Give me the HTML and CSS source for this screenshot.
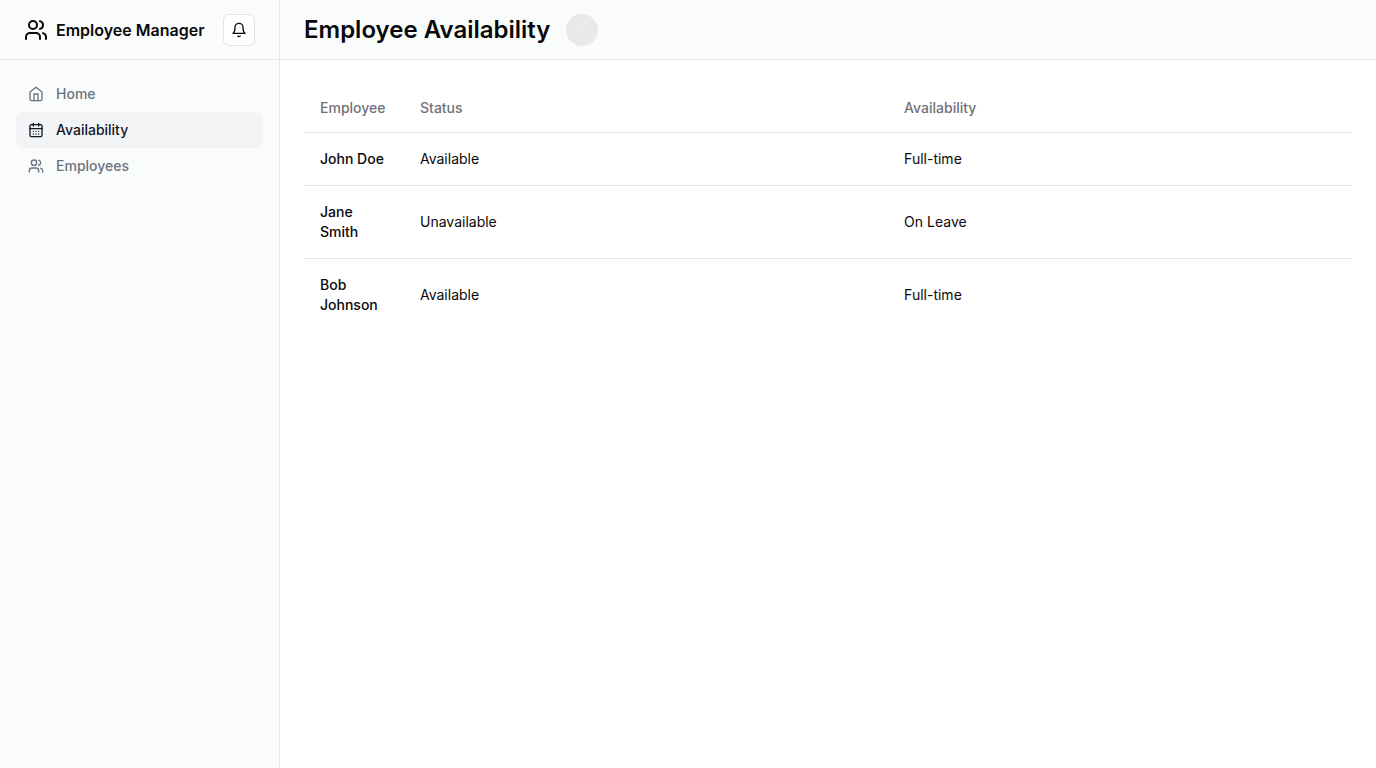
FILE: index.html
```html
<!DOCTYPE html>
<html lang="en">
<head>
<meta charset="utf-8">
<meta name="viewport" content="width=device-width, initial-scale=1">
<title>Employee Availability</title>
<link rel="stylesheet" href="styles.css">
</head>
<body>
<div class="app">
  <aside class="sidebar">
    <div class="sidebar-head">
      <a class="brand" href="#">
        <svg class="icon icon-lg" viewBox="0 0 24 24" aria-hidden="true"><path d="M16 21v-2a4 4 0 0 0-4-4H6a4 4 0 0 0-4 4v2"/><circle cx="9" cy="7" r="4"/><path d="M22 21v-2a4 4 0 0 0-3-3.87"/><path d="M16 3.13a4 4 0 0 1 0 7.75"/></svg>
        <span>Employee Manager</span>
      </a>
      <button class="bell" type="button" aria-label="Toggle notifications">
        <svg class="icon" viewBox="0 0 24 24" aria-hidden="true"><path d="M6 8a6 6 0 0 1 12 0c0 7 3 9 3 9H3s3-2 3-9"/><path d="M10.3 21a1.94 1.94 0 0 0 3.4 0"/></svg>
      </button>
    </div>
    <nav class="nav">
      <a class="nav-link" href="#">
        <svg class="icon" viewBox="0 0 24 24" aria-hidden="true"><path d="m3 9 9-7 9 7v11a2 2 0 0 1-2 2H5a2 2 0 0 1-2-2z"/><path d="M9 22V12h6v10"/></svg>
        Home
      </a>
      <a class="nav-link nav-link-active" href="#" aria-current="page">
        <svg class="icon" viewBox="0 0 24 24" aria-hidden="true"><rect width="18" height="18" x="3" y="4" rx="2"/><path d="M16 2v4M8 2v4M3 10h18M8 14h.01M12 14h.01M16 14h.01M8 18h.01M12 18h.01M16 18h.01"/></svg>
        Availability
      </a>
      <a class="nav-link" href="#">
        <svg class="icon" viewBox="0 0 24 24" aria-hidden="true"><path d="M16 21v-2a4 4 0 0 0-4-4H6a4 4 0 0 0-4 4v2"/><circle cx="9" cy="7" r="4"/><path d="M22 21v-2a4 4 0 0 0-3-3.87"/><path d="M16 3.13a4 4 0 0 1 0 7.75"/></svg>
        Employees
      </a>
    </nav>
  </aside>
  <div class="page">
    <header class="page-head">
      <h1 class="title">Employee Availability</h1>
      <button class="avatar" type="button" aria-label="Toggle user menu"><span class="avatar-dot"></span></button>
    </header>
    <main class="content">
      <table class="table">
        <thead>
          <tr><th class="name-col" scope="col">Employee</th><th scope="col">Status</th><th scope="col">Availability</th></tr>
        </thead>
        <tbody>
          <tr><td class="name">John Doe</td><td>Available</td><td>Full-time</td></tr>
          <tr><td class="name">Jane Smith</td><td>Unavailable</td><td>On Leave</td></tr>
          <tr><td class="name">Bob Johnson</td><td>Available</td><td>Full-time</td></tr>
        </tbody>
      </table>
    </main>
  </div>
</div>
</body>
</html>
```
FILE: styles.css
```css
*,
*::before,
*::after {
  box-sizing: border-box;
}

body {
  margin: 0;
  background: #fff;
  color: #09090b;
  font-family: Inter, "Liberation Sans", sans-serif;
  font-size: 14px;
  line-height: 20px;
}

a {
  color: inherit;
  text-decoration: none;
}

button {
  padding: 0;
  font: inherit;
  color: inherit;
  cursor: pointer;
}

.icon {
  width: 16px;
  height: 16px;
  flex-shrink: 0;
  fill: none;
  stroke: currentColor;
  stroke-width: 2;
  stroke-linecap: round;
  stroke-linejoin: round;
}

.icon-lg {
  width: 24px;
  height: 24px;
}

.app {
  display: grid;
  grid-template-columns: 280px minmax(0, 1fr);
  min-height: 100vh;
}

.sidebar {
  background: #fafcfb;
  border-right: 1px solid #e5e7eb;
}

.sidebar-head,
.page-head {
  display: flex;
  align-items: center;
  height: 60px;
  padding: 0 24px;
  border-bottom: 1px solid #e5e7eb;
}

.brand {
  display: flex;
  align-items: center;
  gap: 8px;
  font-size: 16px;
  line-height: 24px;
  font-weight: 600;
}

.bell {
  display: flex;
  align-items: center;
  justify-content: center;
  width: 32px;
  height: 32px;
  margin-left: auto;
  background: #fff;
  border: 1px solid #e4e4e7;
  border-radius: 6px;
}

.nav {
  display: grid;
  padding: 16px;
  font-weight: 500;
}

.nav-link {
  display: flex;
  align-items: center;
  gap: 12px;
  padding: 8px 12px;
  border-radius: 6px;
  color: #6b7280;
}

.nav-link-active {
  background: #f3f4f6;
  color: #111827;
}

.page-head {
  gap: 16px;
  background: #fafcfb;
}

.title {
  margin: 0;
  font-size: 24px;
  line-height: 32px;
  font-weight: 600;
}

.avatar {
  display: flex;
  align-items: center;
  justify-content: center;
  width: 32px;
  height: 32px;
  background: #e9e9e9;
  border: 0;
  border-radius: 50%;
}

.avatar-dot {
  width: 4px;
  height: 4px;
  background: #ececec;
  border-radius: 50%;
}

.content {
  padding: 24px;
}

.table {
  width: 100%;
  border-collapse: collapse;
}

.table th {
  height: 48px;
  padding: 0 16px;
  color: #71717a;
  font-weight: 500;
  text-align: left;
}

.table td {
  padding: 16px;
}

.table tr {
  border-bottom: 1px solid #e5e7eb;
}

.table tbody tr:last-child {
  border-bottom: 0;
}

.table .name-col {
  width: 100px;
}

.table .name {
  font-weight: 500;
}
```
